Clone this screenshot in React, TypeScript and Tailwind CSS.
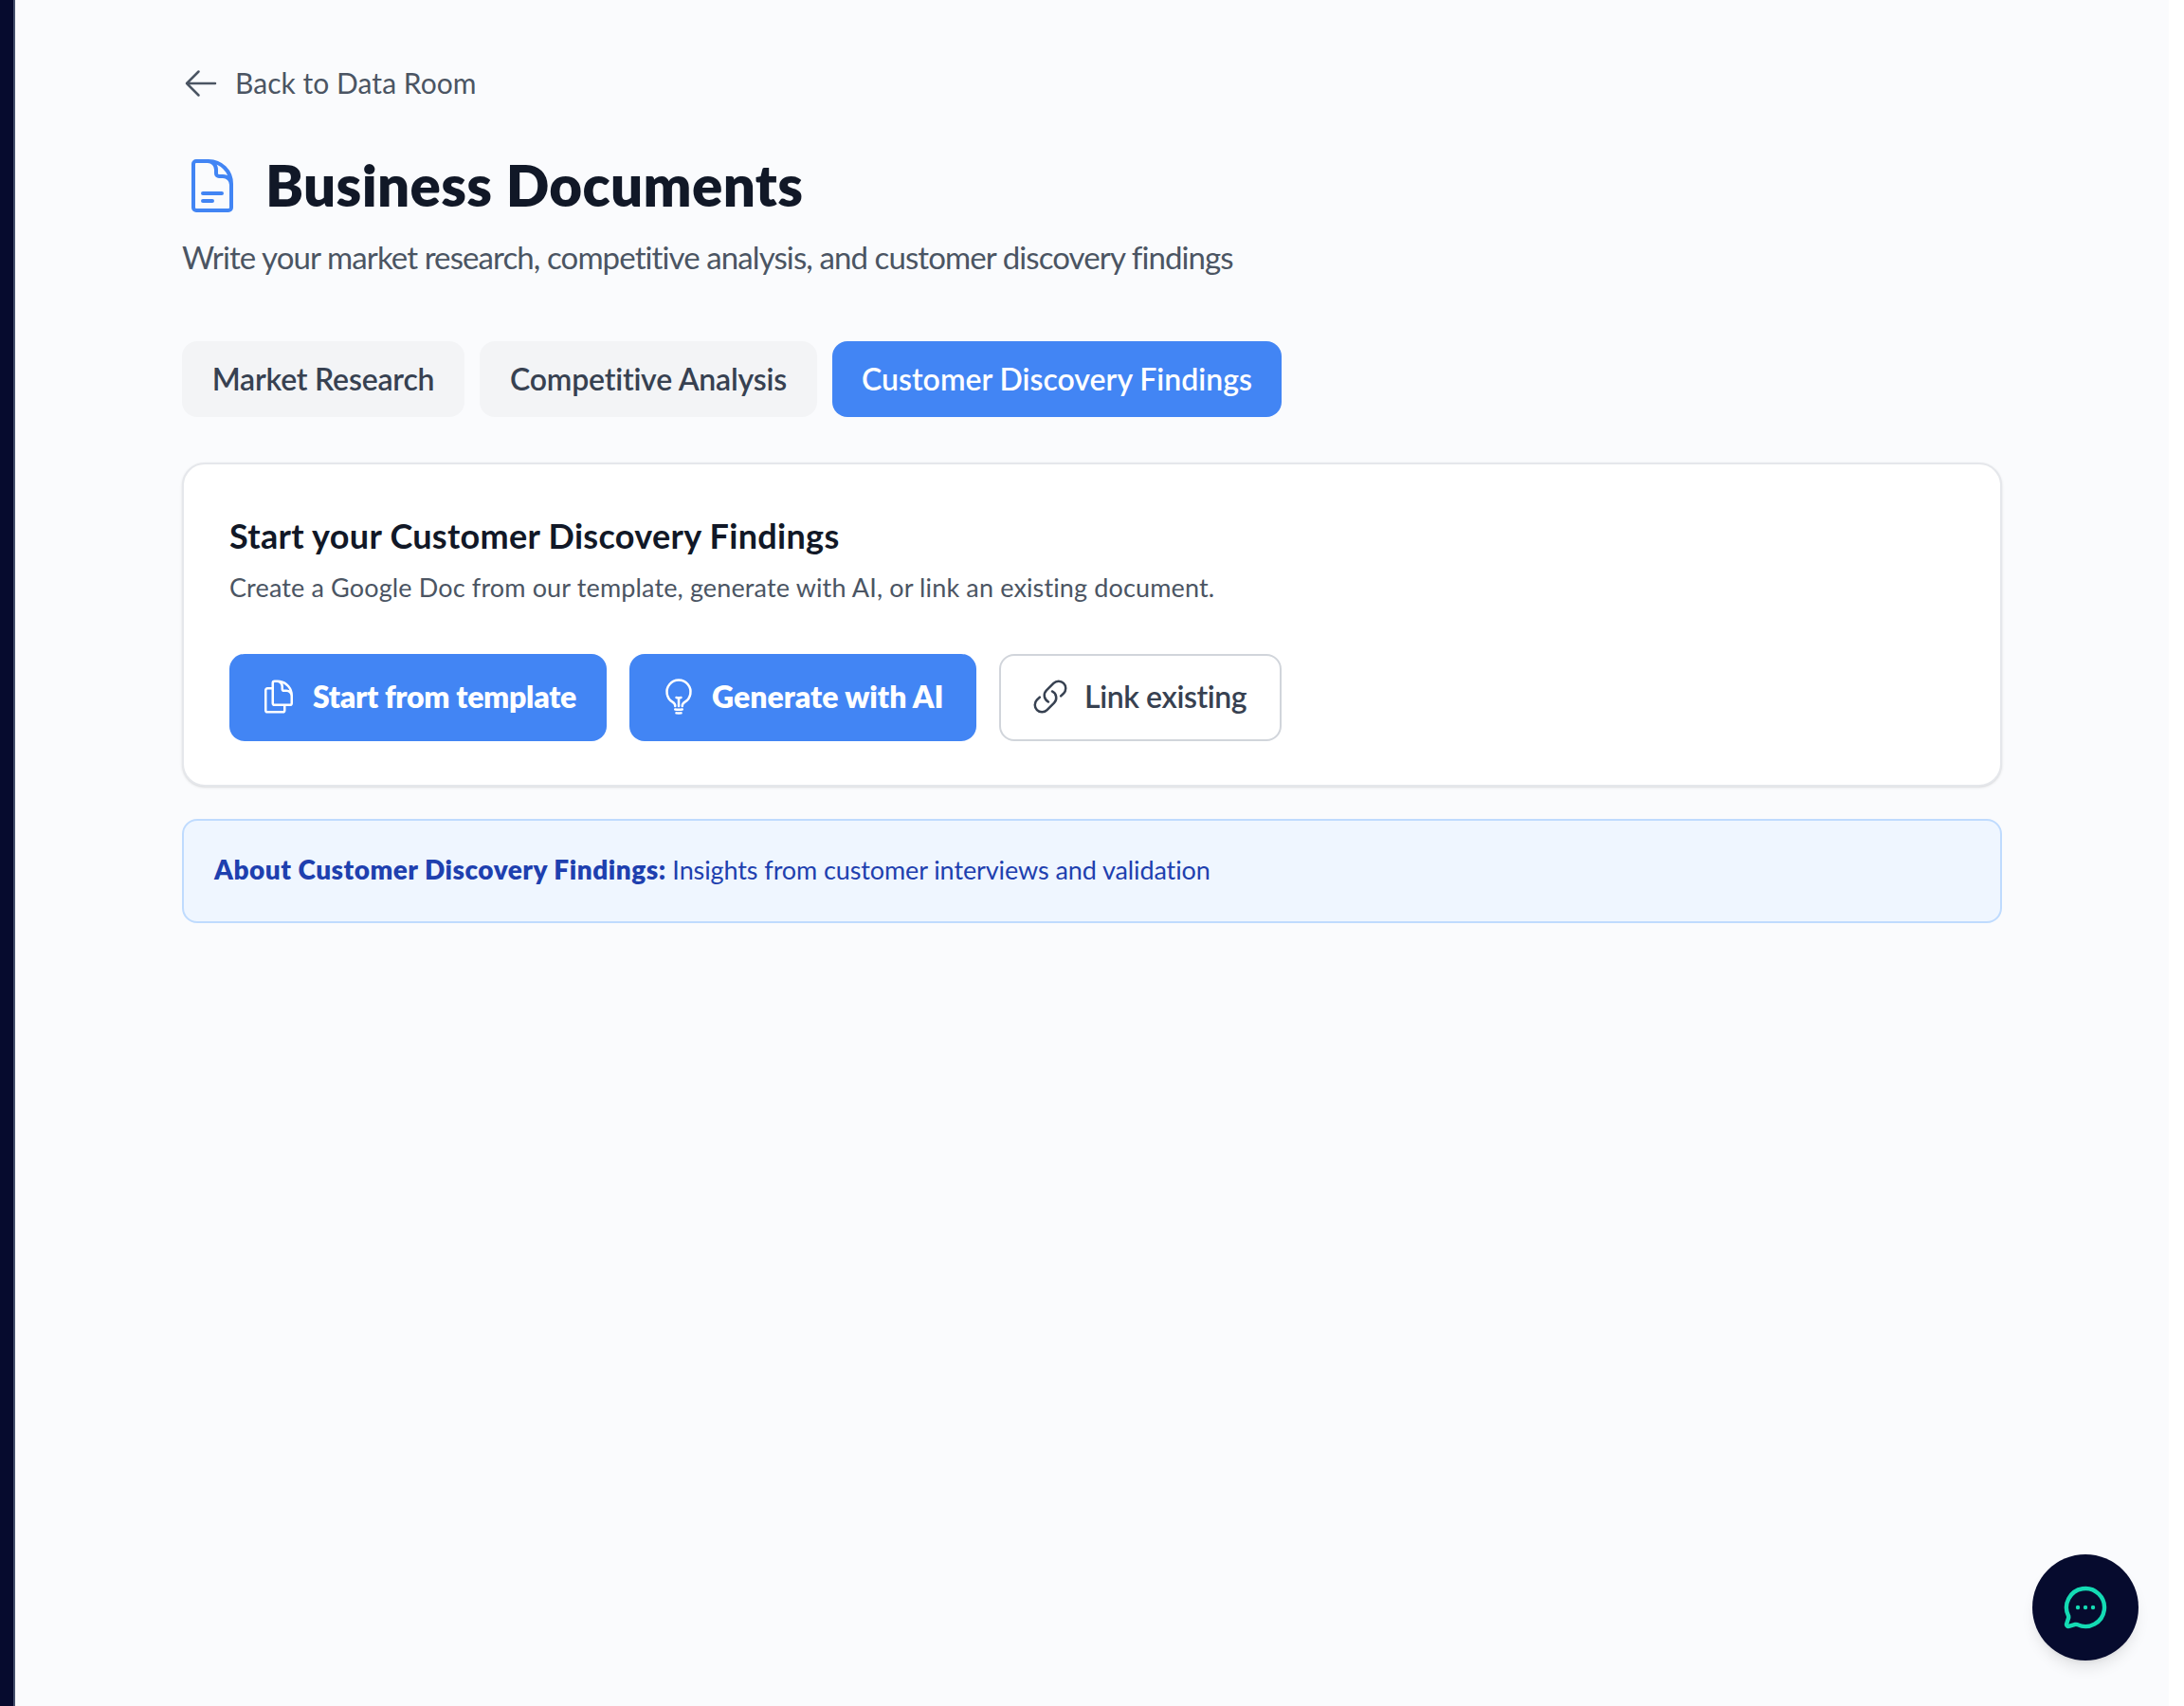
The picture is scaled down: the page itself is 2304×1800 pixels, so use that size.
import { MessageCircleMore } from "lucide-react";

const font = { fontFamily: "Lato, 'Liberation Sans', sans-serif" };

const Icon = ({ d, className }: { d: string; className: string }) => (
  <svg viewBox="0 0 24 24" fill="none" stroke="currentColor" strokeWidth={1.5} strokeLinecap="round" strokeLinejoin="round" className={className}>
    <path d={d} />
  </svg>
);

const arrowLeft = "M10.5 19.5L3 12m0 0l7.5-7.5M3 12h18";
const documentText = "M19.5 14.25v-2.625a3.375 3.375 0 00-3.375-3.375h-1.5A1.125 1.125 0 0113.5 7.125v-1.5a3.375 3.375 0 00-3.375-3.375H8.25m0 12.75h7.5m-7.5 3H12M10.5 2.25H5.625c-.621 0-1.125.504-1.125 1.125v17.25c0 .621.504 1.125 1.125 1.125h12.75c.621 0 1.125-.504 1.125-1.125V11.25a9 9 0 00-9-9z";
const documentDuplicate = "M15.75 17.25v3.375c0 .621-.504 1.125-1.125 1.125h-9.75a1.125 1.125 0 01-1.125-1.125V7.875c0-.621.504-1.125 1.125-1.125H6.75a9.06 9.06 0 011.5.124m7.5 10.376h3.375c.621 0 1.125-.504 1.125-1.125V11.25c0-4.46-3.243-8.161-7.5-8.876a9.06 9.06 0 00-1.5-.124H9.375c-.621 0-1.125.504-1.125 1.125v3.5m7.5 10.375H9.375a1.125 1.125 0 01-1.125-1.125v-9.25m12 6.625v-1.875a3.375 3.375 0 00-3.375-3.375h-1.5a1.125 1.125 0 01-1.125-1.125v-1.5a3.375 3.375 0 00-3.375-3.375H9.75";
const lightBulb = "M12 18v-5.25m0 0a6.01 6.01 0 001.5-.189m-1.5.189a6.01 6.01 0 01-1.5-.189m3.75 7.478a12.06 12.06 0 01-4.5 0m3.75 2.383a14.406 14.406 0 01-3 0M14.25 18v-.192c0-.983.658-1.823 1.508-2.316a7.5 7.5 0 10-7.517 0c.85.493 1.509 1.333 1.509 2.316V18";
const link = "M13.19 8.688a4.5 4.5 0 011.242 7.244l-4.5 4.5a4.5 4.5 0 01-6.364-6.364l1.757-1.757m13.35-.622l1.757-1.757a4.5 4.5 0 00-6.364-6.364l-4.5 4.5a4.5 4.5 0 001.242 7.244";

const App = () => {
  return (
    <div className="min-h-[1800px] flex bg-white" style={font}>
      {/* Sidebar edge */}
      <div className="w-[16px] shrink-0 bg-[#060b2e] border-r-2 border-[#46506c]" />

      {/* Main */}
      <main className="flex-1 bg-[#fafbfd] px-[176px] pt-[64px]">
        <a className="flex items-center gap-[16px] h-[48px] mb-[48px] text-[30px] leading-[46px] tracking-[0.05px] text-[#4b5563]">
          <Icon d={arrowLeft} className="w-[40px] h-[40px]" />
          <span className="mb-[2px]">Back to Data Room</span>
        </a>

        <div className="flex items-center gap-[24px] h-[72px] mb-[11px]">
          <Icon d={documentText} className="w-[64px] h-[64px] text-[#4285f4]" />
          <h1 className="text-[60px] font-extrabold leading-[68px] tracking-[0.35px] pb-[2px] text-[#111827]">Business Documents</h1>
        </div>
        <p className="text-[33px] leading-[56px] tracking-[-0.9px] text-[#4b5563] mb-[61px]">
          Write your market research, competitive analysis, and customer discovery findings
        </p>

        {/* Tabs */}
        <div className="flex gap-[16px] mb-[48px]">
          <button className="h-[80px] w-[298px] rounded-[16px] bg-[#f3f4f6] text-[#374151] text-[32px] font-semibold tracking-[-0.2px]">Market Research</button>
          <button className="h-[80px] w-[356px] rounded-[16px] bg-[#f3f4f6] text-[#374151] text-[32px] font-semibold tracking-[-0.2px]">Competitive Analysis</button>
          <button className="h-[80px] w-[474px] rounded-[16px] bg-[#4285f4] text-white text-[32px] font-semibold">Customer Discovery Findings</button>
        </div>

        {/* Start card */}
        <section className="bg-white border-2 border-[#e5e7eb] rounded-[24px] shadow-sm px-[48px] pt-[49px] pb-[46px] mb-[34px]">
          <h2 className="text-[36px] leading-[53px] tracking-[0.3px] font-bold text-[#111827] mb-[8px]">Start your Customer Discovery Findings</h2>
          <p className="text-[27px] leading-[40px] tracking-[0.14px] text-[#4b5563] mb-[50px]">
            Create a Google Doc from our template, generate with AI, or link an existing document.
          </p>
          <div className="flex gap-[24px]">
            <button className="flex items-center gap-[16px] h-[92px] w-[398px] px-[32px] pb-[2px] rounded-[16px] bg-[#4285f4] text-white text-[32px] font-extrabold tracking-[-0.3px]">
              <Icon d={documentDuplicate} className="w-[40px] h-[40px]" />
              Start from template
            </button>
            <button className="flex items-center gap-[15px] h-[92px] w-[366px] px-[32px] pb-[2px] rounded-[16px] bg-[#4285f4] text-white text-[32px] font-extrabold">
              <Icon d={lightBulb} className="w-[40px] h-[40px]" />
              Generate with AI
            </button>
            <button className="flex items-center gap-[16px] h-[92px] w-[298px] px-[32px] pb-[2px] rounded-[16px] bg-white border-2 border-[#d1d5db] text-[#374151] text-[32px] font-semibold tracking-[-0.4px]">
              <Icon d={link} className="w-[40px] h-[40px]" />
              Link existing
            </button>
          </div>
        </section>

        {/* Info box */}
        <div className="bg-[#eff6ff] border-2 border-[#bfdbfe] rounded-[16px] pt-[31px] pb-[34px] px-[32px] text-[27px] leading-[40px] tracking-[-0.1px] text-[#1e40af]">
          <strong className="text-[28px] font-extrabold tracking-[0.5px]">About Customer Discovery Findings:</strong> Insights from customer interviews and validation
        </div>
      </main>

      {/* Scrollbar gutter */}
      <div className="w-[16px] shrink-0 bg-white" />

      {/* Chat button */}
      <button className="fixed right-[48px] bottom-[48px] w-[112px] h-[112px] rounded-full bg-[#060b2e] shadow-lg flex items-center justify-center text-[#14dbb4]">
        <MessageCircleMore strokeWidth={2.2} className="w-[48px] h-[48px]" />
      </button>
    </div>
  );
};

export default App;
